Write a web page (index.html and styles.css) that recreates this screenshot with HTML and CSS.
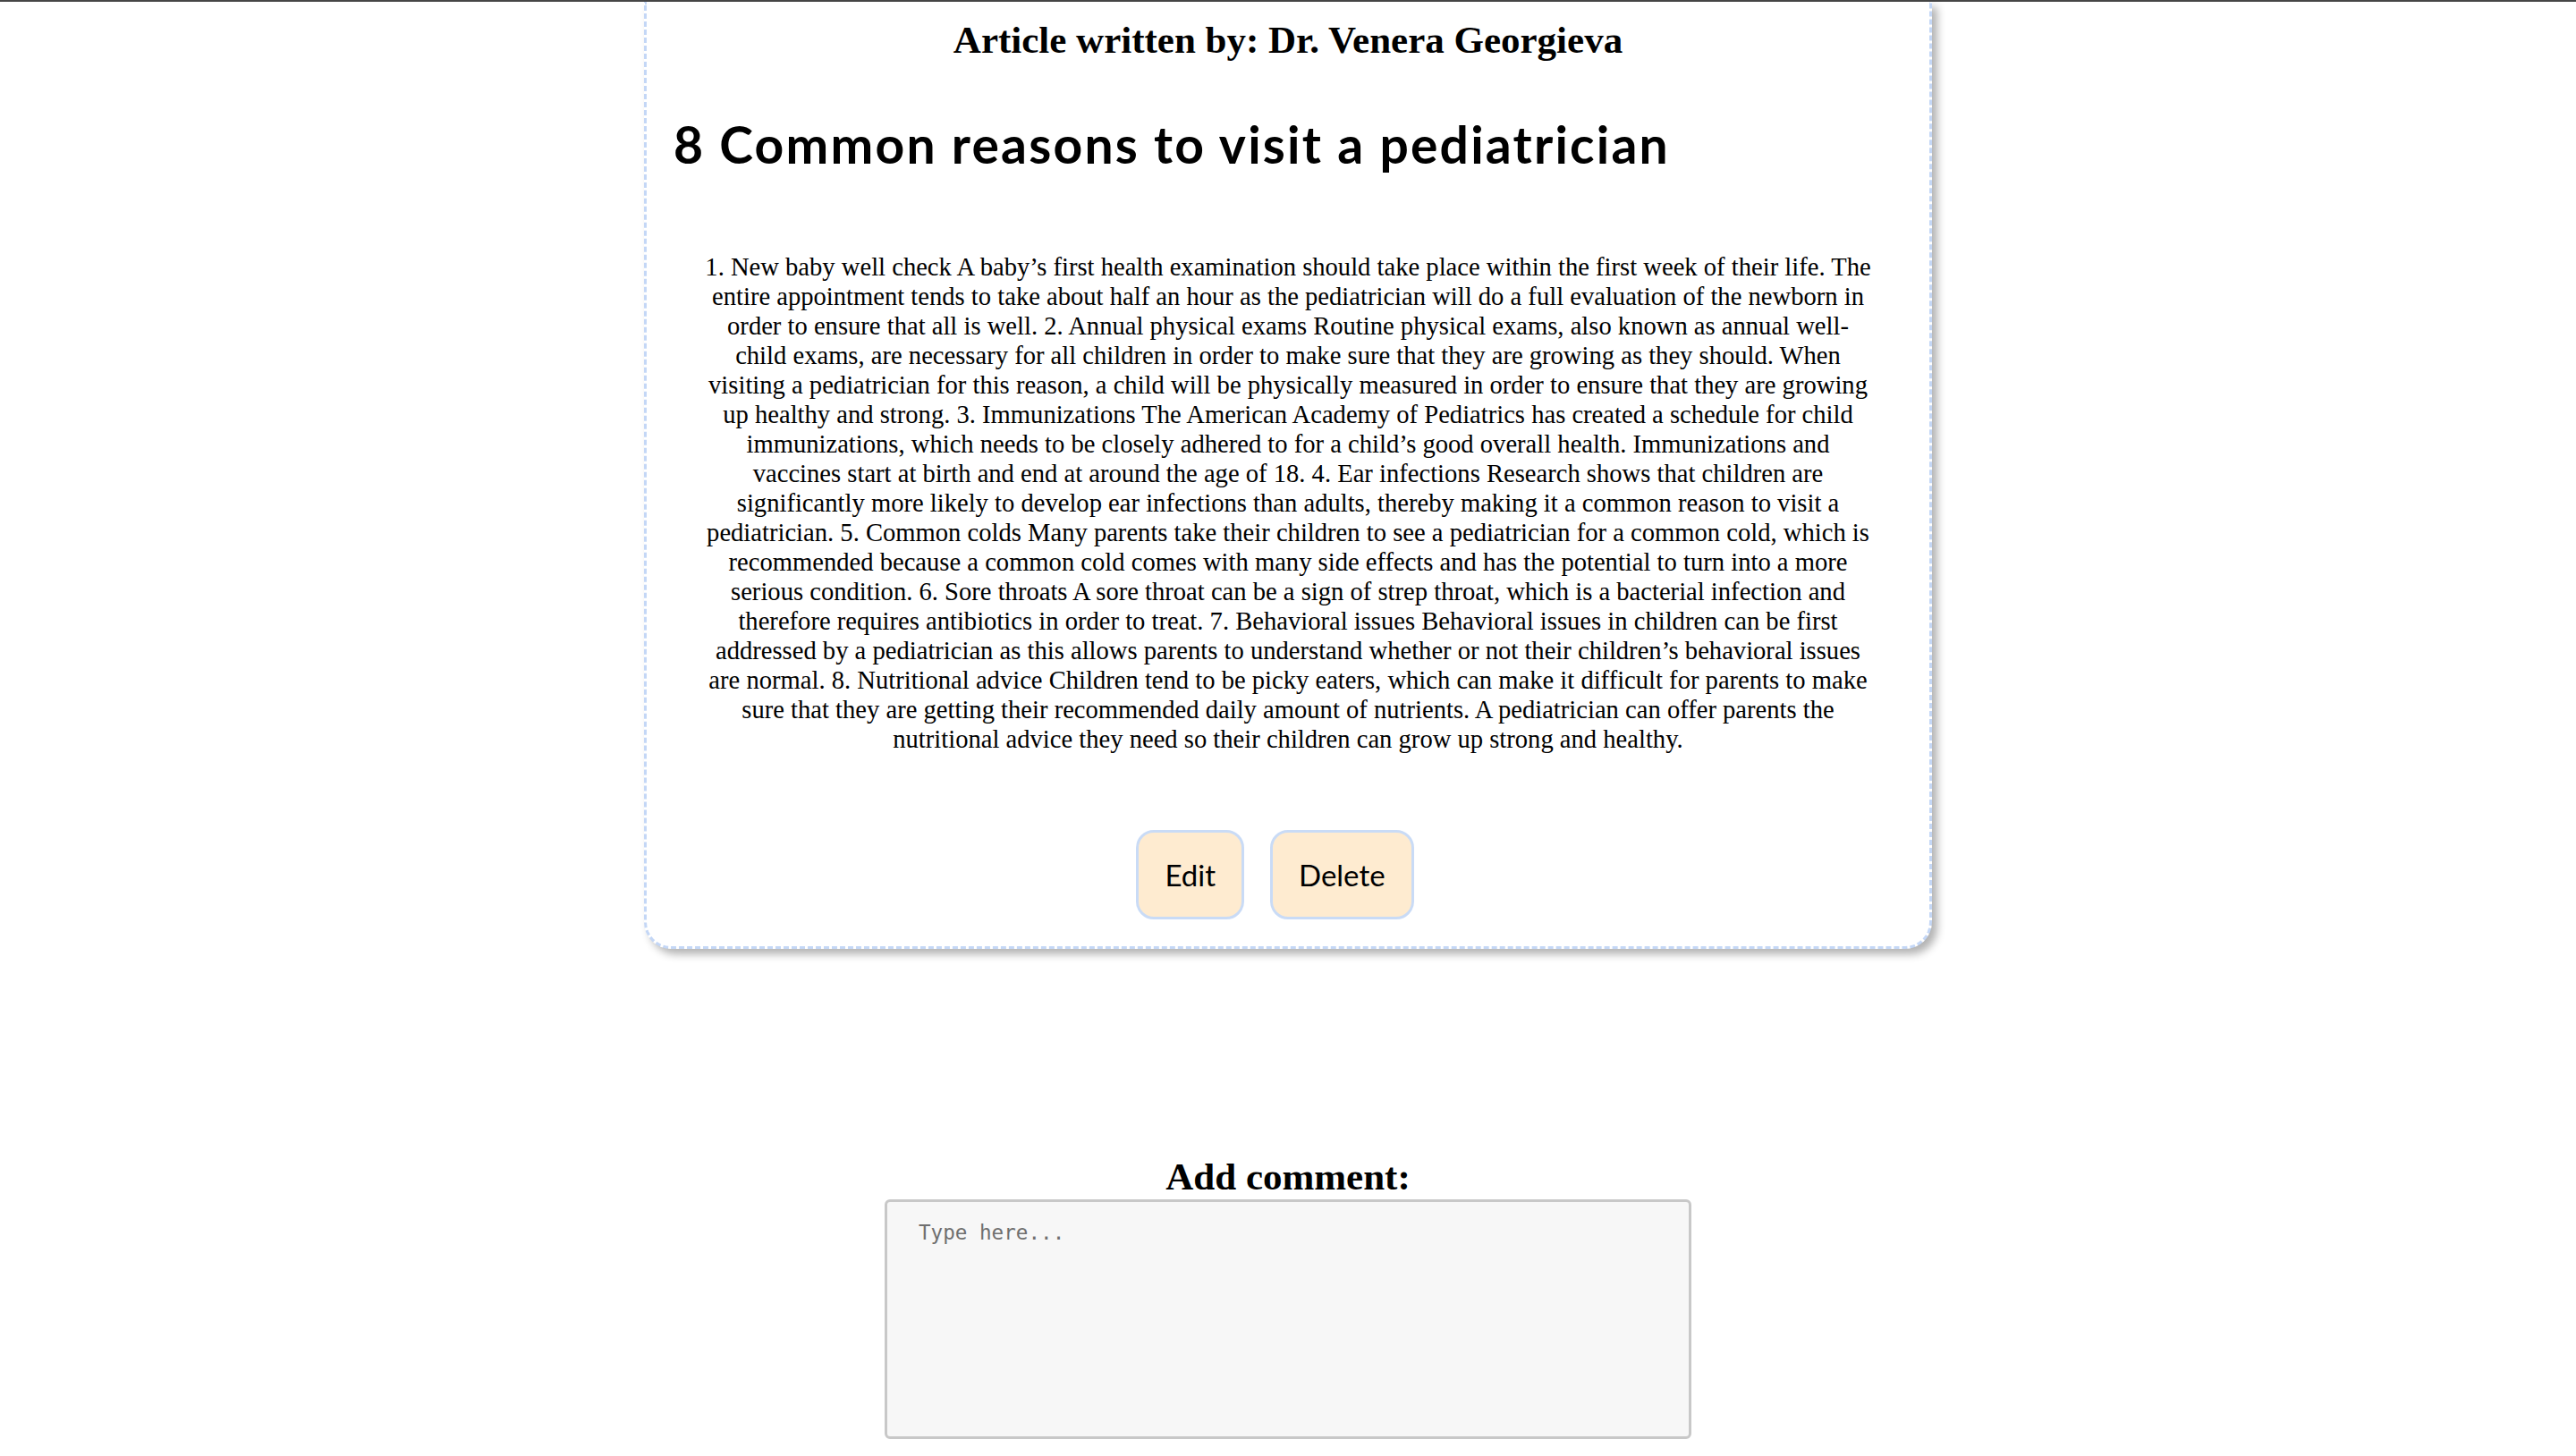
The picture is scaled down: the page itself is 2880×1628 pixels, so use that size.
FILE: index.html
```html
<!DOCTYPE html>
<html lang="en">
<head>
<meta charset="utf-8">
<title>8 Common reasons to visit a pediatrician</title>
<link rel="stylesheet" href="styles.css">
</head>
<body>
<div class="topline"></div>
<main class="page">
  <article class="card">
    <h2 class="author">Article written by: Dr. Venera Georgieva</h2>
    <h1 class="title">8 Common reasons to visit a pediatrician</h1>
    <p class="content">1. New baby well check A baby’s first health examination should take place within the first week of their life. The entire appointment tends to take about half an hour as the pediatrician will do a full evaluation of the newborn in order to ensure that all is well. 2. Annual physical exams Routine physical exams, also known as annual well-child exams, are necessary for all children in order to make sure that they are growing as they should. When visiting a pediatrician for this reason, a child will be physically measured in order to ensure that they are growing up healthy and strong. 3. Immunizations The American Academy of Pediatrics has created a schedule for child immunizations, which needs to be closely adhered to for a child’s good overall health. Immunizations and vaccines start at birth and end at around the age of 18. 4. Ear infections Research shows that children are significantly more likely to develop ear infections than adults, thereby making it a common reason to visit a pediatrician. 5. Common colds Many parents take their children to see a pediatrician for a common cold, which is recommended because a common cold comes with many side effects and has the potential to turn into a more serious condition. 6. Sore throats A sore throat can be a sign of strep throat, which is a bacterial infection and therefore requires antibiotics in order to treat. 7. Behavioral issues Behavioral issues in children can be first addressed by a pediatrician as this allows parents to understand whether or not their children’s behavioral issues are normal. 8. Nutritional advice Children tend to be picky eaters, which can make it difficult for parents to make sure that they are getting their recommended daily amount of nutrients. A pediatrician can offer parents the nutritional advice they need so their children can grow up strong and healthy.</p>
    <div class="actions">
      <button class="btn" type="button">Edit</button>
      <button class="btn" type="button">Delete</button>
    </div>
  </article>
  <section class="comment">
    <h2 class="comment-title">Add comment:</h2>
    <textarea class="comment-box" placeholder="Type here..."></textarea>
  </section>
</main>
</body>
</html>
```

FILE: styles.css
```css
html, body {
  margin: 0;
  padding: 0;
  background: #ffffff;
}

body {
  font-family: "Liberation Serif", "Times New Roman", serif;
  color: #000;
}

.topline {
  height: 2px;
  background: #464646;
}

.page {
  display: flex;
  flex-direction: column;
  align-items: center;
}

.card {
  box-sizing: border-box;
  width: 50%;
  border: 3px dashed #c4d7f6;
  border-top: none;
  border-radius: 0 0 30px 30px;
  box-shadow: 6px 6px 10px rgba(0, 0, 0, 0.3);
  padding: 18px 0 30px;
  background: #fff;
}

.author {
  margin: 0;
  font-size: 43px;
  line-height: 49px;
  font-weight: bold;
  text-align: center;
}

.title {
  margin: 58px 0 0;
  padding-left: 30px;
  font-family: Lato, "Open Sans", sans-serif;
  font-weight: 700;
  font-size: 57px;
  line-height: 68px;
  letter-spacing: 2.2px;
}

.content {
  width: 1307px;
  margin: 87px auto 0;
  font-size: 28.6px;
  line-height: 33px;
  text-align: center;
}

.actions {
  display: flex;
  justify-content: center;
  margin-top: 85px;
}

.btn {
  margin: 0 29px 0 0;
  padding: 27px 29px;
  border: 3px solid #c9dbf6;
  border-radius: 20px;
  background: #feebd0;
  font-family: Lato, "Open Sans", sans-serif;
  font-weight: 400;
  font-size: 33px;
  line-height: 40px;
  color: #000;
}

.comment {
  margin-top: 230px;
  display: flex;
  flex-direction: column;
  align-items: center;
}

.comment-title {
  margin: 0;
  font-size: 43px;
  line-height: 49px;
  font-weight: bold;
}

.comment-box {
  box-sizing: border-box;
  display: block;
  width: 902px;
  height: 268px;
  margin-top: 1px;
  padding: 21px 35px;
  border: 3px solid #c8c8c8;
  border-radius: 6px;
  background: #f7f7f7;
  font-family: "DejaVu Sans Mono", monospace;
  font-size: 22.6px;
  resize: none;
}

.comment-box::placeholder {
  color: #6f6f6f;
}
```
